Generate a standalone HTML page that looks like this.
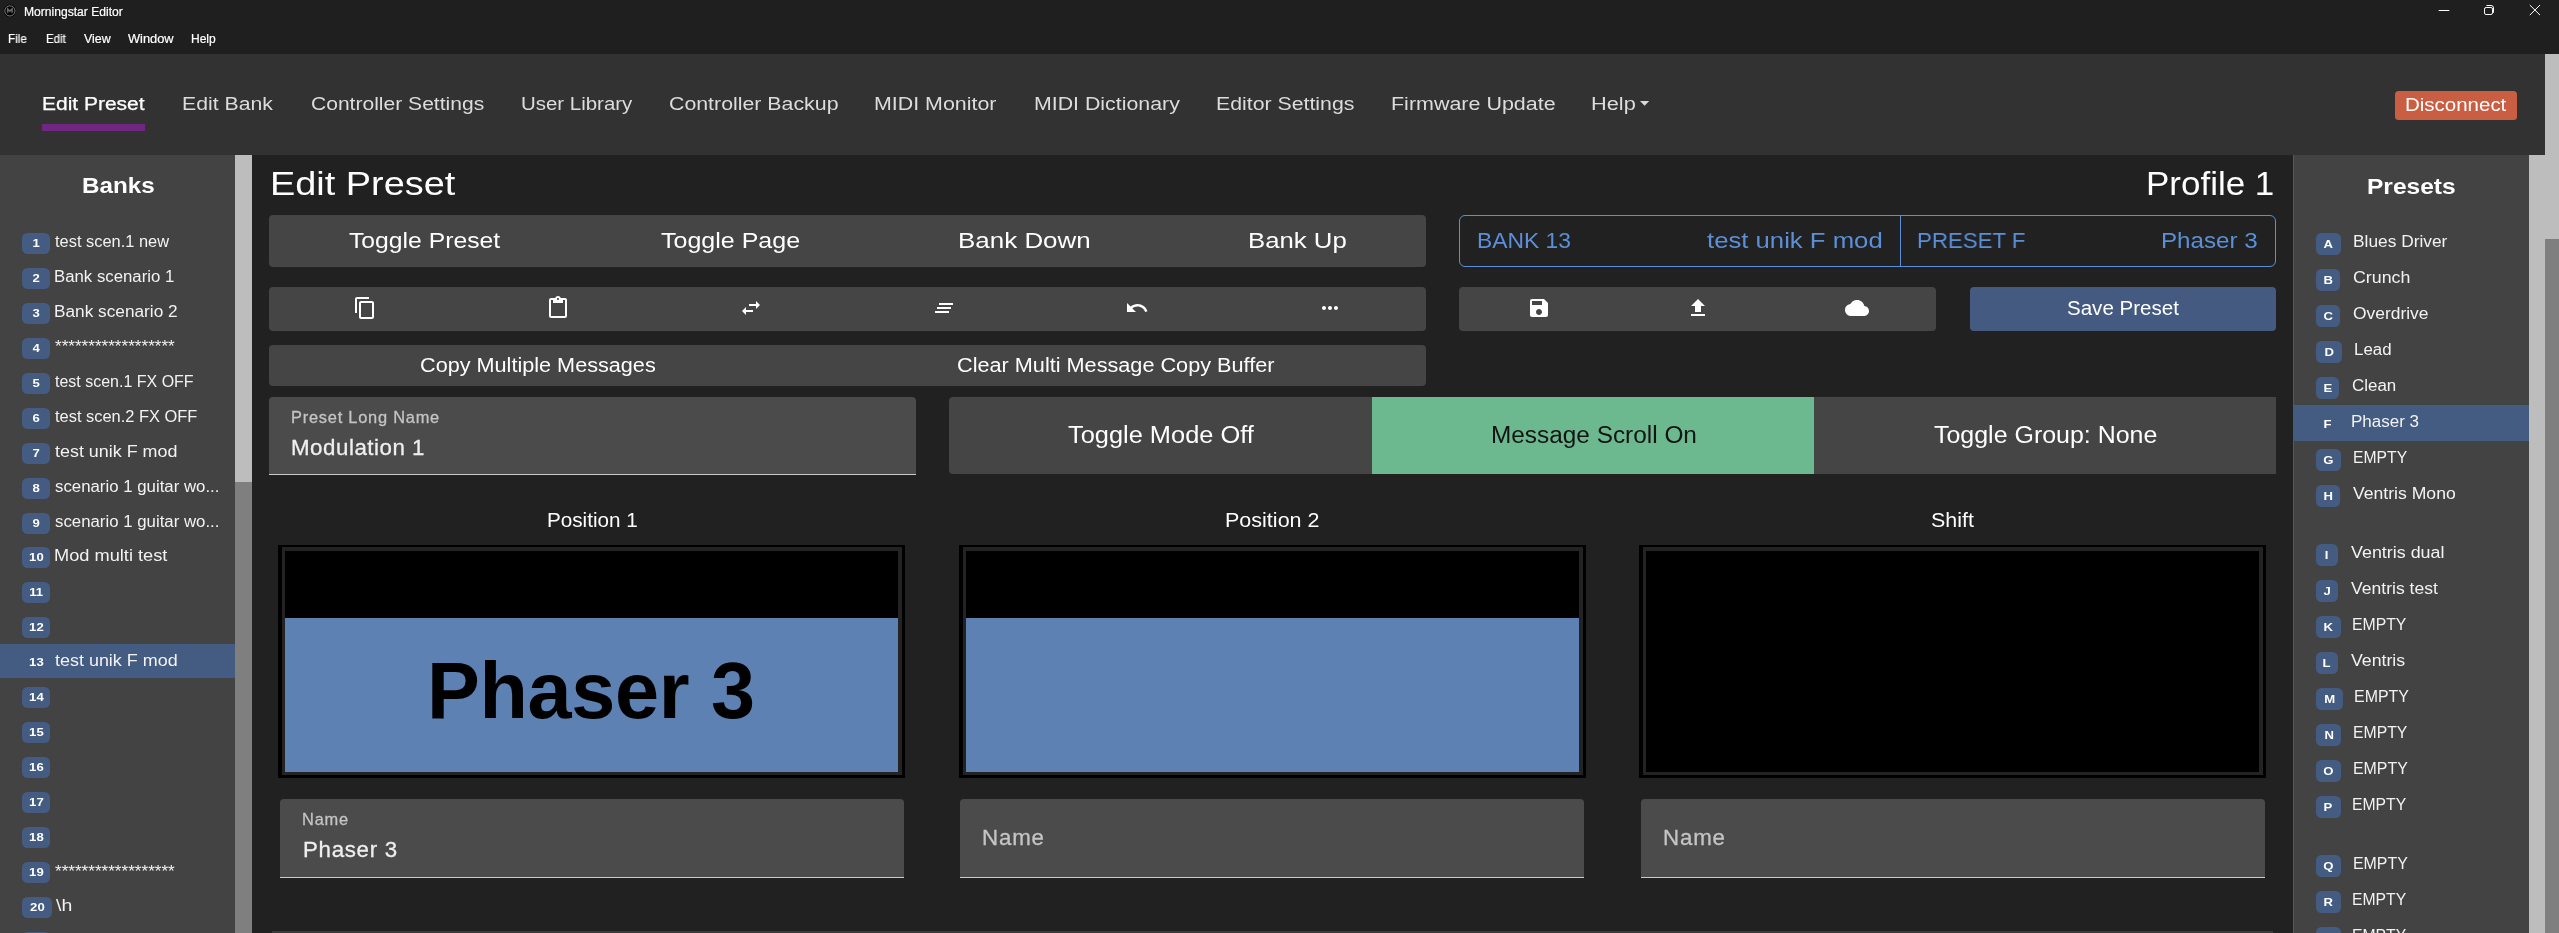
<!DOCTYPE html>
<html><head><meta charset="utf-8"><title>Morningstar Editor</title>
<style>
html,body{margin:0;padding:0;background:#212121;}
body{width:2559px;height:933px;position:relative;overflow:hidden;font-family:"Liberation Sans", sans-serif;}
.b{position:absolute;}
.t{will-change:transform;position:absolute;white-space:nowrap;line-height:1;transform-origin:0 0;font-family:"Liberation Sans", sans-serif;}
.m{position:absolute;white-space:nowrap;line-height:1;font-family:"Liberation Sans", sans-serif;}
.bd{position:absolute;height:21px;line-height:21.5px;border-radius:5.5px;background:#445b82;color:#fff;font-weight:700;font-size:11.5px;text-align:center;font-family:"Liberation Sans", sans-serif;}
.bd span{will-change:transform;display:inline-block;transform:scaleX(1.14);}
svg{position:absolute;overflow:visible}
</style></head><body>
<div class="b" style="left:0px;top:0px;width:2559.00px;height:54.00px;background:#1f1f1f;"></div><div class="b" style="left:0px;top:54px;width:2545.00px;height:101.00px;background:#323232;"></div><div class="b" style="left:0px;top:155px;width:235.00px;height:778.00px;background:#434343;"></div><div class="b" style="left:2293px;top:155px;width:236.00px;height:778.00px;background:#434343;"></div><div class="b" style="left:2293px;top:155px;width:1.00px;height:778.00px;background:#585858;"></div><div class="b" style="left:235px;top:155px;width:17.00px;height:327.00px;background:#bdbdbd;"></div><div class="b" style="left:235px;top:482px;width:17.00px;height:451.00px;background:#7f7f7f;"></div><div class="b" style="left:2529px;top:155px;width:16.00px;height:778.00px;background:#bdbdbd;"></div><div class="b" style="left:2545px;top:54px;width:14.00px;height:185.00px;background:#bdbdbd;"></div><div class="b" style="left:2545px;top:239px;width:14.00px;height:694.00px;background:#7f7f7f;"></div><div class="b" style="left:42.2px;top:124px;width:103.20px;height:7.00px;background:#702782;"></div><div class="b" style="left:2395px;top:91px;width:122.00px;height:29.00px;background:#ca5e42;border-radius:3.5px;"></div><div class="b" style="left:269px;top:215px;width:1157.00px;height:52.00px;background:#454545;border-radius:4px;"></div><div class="b" style="left:269px;top:287px;width:1157.00px;height:43.50px;background:#454545;border-radius:4px;"></div><div class="b" style="left:269px;top:345px;width:1157.00px;height:41.00px;background:#454545;border-radius:4px;"></div><div class="b" style="left:1459px;top:287px;width:477.00px;height:43.50px;background:#454545;border-radius:4px;"></div><div class="b" style="left:1970px;top:287px;width:306.00px;height:43.50px;background:#445a80;border-radius:4px;"></div><div class="b" style="left:1459px;top:215px;width:817px;height:52px;border:1px solid #5b8fd8;border-radius:6px;box-sizing:border-box"></div><div class="b" style="left:1900px;top:215px;width:1.00px;height:52.00px;background:#5b8fd8;"></div><div class="b" style="left:269px;top:397px;width:647.00px;height:77.60px;background:#4b4b4b;border-radius:4px 4px 0 0;border-bottom:1px solid #c9c9c9;box-sizing:border-box;"></div><div class="b" style="left:949px;top:397px;width:1327.00px;height:77.00px;background:#454545;border-radius:4px 0 0 4px;"></div><div class="b" style="left:1372px;top:397px;width:442.00px;height:77.00px;background:#6cb98f;"></div><div class="b" style="left:278px;top:545px;width:627.00px;height:233.00px;background:#000;"></div><div class="b" style="left:282.2px;top:547.4px;width:619.80px;height:228.10px;background:#232323;"></div><div class="b" style="left:285.4px;top:551.2px;width:612.70px;height:220.50px;background:#000;"></div><div class="b" style="left:285.4px;top:618px;width:612.70px;height:153.70px;background:#5d81b2;"></div><div class="b" style="left:959px;top:545px;width:627.00px;height:233.00px;background:#000;"></div><div class="b" style="left:963.2px;top:547.4px;width:619.80px;height:228.10px;background:#232323;"></div><div class="b" style="left:966.4px;top:551.2px;width:612.70px;height:220.50px;background:#000;"></div><div class="b" style="left:966.4px;top:618px;width:612.70px;height:153.70px;background:#5d81b2;"></div><div class="b" style="left:1639px;top:545px;width:627.00px;height:233.00px;background:#000;"></div><div class="b" style="left:1643.2px;top:547.4px;width:619.80px;height:228.10px;background:#232323;"></div><div class="b" style="left:1646.4px;top:551.2px;width:612.70px;height:220.50px;background:#000;"></div><div class="b" style="left:280px;top:799px;width:624.00px;height:78.50px;background:#4b4b4b;border-radius:4px 4px 0 0;border-bottom:1px solid #c9c9c9;box-sizing:border-box;"></div><div class="b" style="left:960px;top:799px;width:624.00px;height:78.50px;background:#4b4b4b;border-radius:4px 4px 0 0;border-bottom:1px solid #c9c9c9;box-sizing:border-box;"></div><div class="b" style="left:1641px;top:799px;width:624.00px;height:78.50px;background:#4b4b4b;border-radius:4px 4px 0 0;border-bottom:1px solid #c9c9c9;box-sizing:border-box;"></div><div class="b" style="left:272px;top:931px;width:2001.00px;height:2.00px;background:#3b3b3b;"></div><div class="b" style="left:0px;top:643.7px;width:235.00px;height:34.80px;background:#445b82;"></div><div class="b" style="left:2293px;top:405.2px;width:236.00px;height:36.00px;background:#445b82;"></div>
<div class="bd" style="left:22px;top:232.80px;width:28px"><span>1</span></div><div class="bd" style="left:22px;top:267.76px;width:28px"><span>2</span></div><div class="bd" style="left:22px;top:302.73px;width:28px"><span>3</span></div><div class="bd" style="left:22px;top:337.70px;width:28px"><span>4</span></div><div class="bd" style="left:22px;top:372.66px;width:28px"><span>5</span></div><div class="bd" style="left:22px;top:407.62px;width:28px"><span>6</span></div><div class="bd" style="left:22px;top:442.59px;width:28px"><span>7</span></div><div class="bd" style="left:22px;top:477.56px;width:28px"><span>8</span></div><div class="bd" style="left:22px;top:512.52px;width:28px"><span>9</span></div><div class="bd" style="left:22px;top:547.49px;width:28px"><span>10</span></div><div class="bd" style="left:22px;top:582.45px;width:28px"><span>11</span></div><div class="bd" style="left:22px;top:617.41px;width:28px"><span>12</span></div><div class="bd" style="left:22px;top:652.38px;width:28px"><span>13</span></div><div class="bd" style="left:22px;top:687.35px;width:28px"><span>14</span></div><div class="bd" style="left:22px;top:722.31px;width:28px"><span>15</span></div><div class="bd" style="left:22px;top:757.28px;width:28px"><span>16</span></div><div class="bd" style="left:22px;top:792.24px;width:28px"><span>17</span></div><div class="bd" style="left:22px;top:827.21px;width:28px"><span>18</span></div><div class="bd" style="left:22px;top:862.17px;width:28px"><span>19</span></div><div class="bd" style="left:22px;top:897.13px;width:30px"><span>20</span></div><div class="bd" style="left:22px;top:932.10px;width:28px"><span>21</span></div><div class="bd" style="left:2316px;top:232.90px;width:25.00px;height:22px;line-height:22.5px"><span>A</span></div><div class="bd" style="left:2316px;top:268.90px;width:24.30px;height:22px;line-height:22.5px"><span>B</span></div><div class="bd" style="left:2316px;top:304.90px;width:24.00px;height:22px;line-height:22.5px"><span>C</span></div><div class="bd" style="left:2316px;top:340.90px;width:25.90px;height:22px;line-height:22.5px"><span>D</span></div><div class="bd" style="left:2316px;top:376.90px;width:23.00px;height:22px;line-height:22.5px"><span>E</span></div><div class="bd" style="left:2316px;top:412.90px;width:23.50px;height:22px;line-height:22.5px"><span>F</span></div><div class="bd" style="left:2316px;top:448.90px;width:24.90px;height:22px;line-height:22.5px"><span>G</span></div><div class="bd" style="left:2316px;top:484.90px;width:24.20px;height:22px;line-height:22.5px"><span>H</span></div><div class="bd" style="left:2316px;top:544.20px;width:21.90px;height:22px;line-height:22.5px"><span>I</span></div><div class="bd" style="left:2316px;top:580.20px;width:21.90px;height:22px;line-height:22.5px"><span>J</span></div><div class="bd" style="left:2316px;top:616.20px;width:24.50px;height:22px;line-height:22.5px"><span>K</span></div><div class="bd" style="left:2316px;top:652.20px;width:21.90px;height:22px;line-height:22.5px"><span>L</span></div><div class="bd" style="left:2316px;top:688.20px;width:26.70px;height:22px;line-height:22.5px"><span>M</span></div><div class="bd" style="left:2316px;top:724.20px;width:25.40px;height:22px;line-height:22.5px"><span>N</span></div><div class="bd" style="left:2316px;top:760.20px;width:25.40px;height:22px;line-height:22.5px"><span>O</span></div><div class="bd" style="left:2316px;top:796.20px;width:24.50px;height:22px;line-height:22.5px"><span>P</span></div><div class="bd" style="left:2316px;top:855.10px;width:25.40px;height:22px;line-height:22.5px"><span>Q</span></div><div class="bd" style="left:2316px;top:891.10px;width:24.50px;height:22px;line-height:22.5px"><span>R</span></div><div class="bd" style="left:2316px;top:927.10px;width:24.50px;height:22px;line-height:22.5px"><span>S</span></div>
<span class="t" style="left:23.80px;top:6.00px;font-size:12px;color:#ffffff;transform:scaleX(1.0077);-webkit-text-stroke:0.2px;">Morningstar Editor</span><span class="t" style="left:8.40px;top:33.00px;font-size:12px;color:#ffffff;transform:scaleX(0.9714);-webkit-text-stroke:0.2px;">File</span><span class="t" style="left:45.50px;top:33.00px;font-size:12px;color:#ffffff;transform:scaleX(0.9605);-webkit-text-stroke:0.2px;">Edit</span><span class="t" style="left:84.00px;top:33.00px;font-size:12px;color:#ffffff;transform:scaleX(1.0334);-webkit-text-stroke:0.2px;">View</span><span class="t" style="left:128.00px;top:33.00px;font-size:12px;color:#ffffff;transform:scaleX(1.0694);-webkit-text-stroke:0.2px;">Window</span><span class="t" style="left:191.00px;top:33.00px;font-size:12px;color:#ffffff;transform:scaleX(0.9998);-webkit-text-stroke:0.2px;">Help</span><span class="t" style="left:42.40px;top:96.00px;font-size:17.5px;color:#ffffff;transform:scaleX(1.1979);-webkit-text-stroke:0.25px #fff;">Edit Preset</span><span class="t" style="left:181.79px;top:96.00px;font-size:17.5px;color:#dcdcdc;transform:scaleX(1.2137);">Edit Bank</span><span class="t" style="left:310.50px;top:96.00px;font-size:17.5px;color:#dcdcdc;transform:scaleX(1.2031);">Controller Settings</span><span class="t" style="left:520.53px;top:96.00px;font-size:17.5px;color:#dcdcdc;transform:scaleX(1.1676);">User Library</span><span class="t" style="left:669.10px;top:96.00px;font-size:17.5px;color:#dcdcdc;transform:scaleX(1.2185);">Controller Backup</span><span class="t" style="left:874.28px;top:96.00px;font-size:17.5px;color:#dcdcdc;transform:scaleX(1.2222);">MIDI Monitor</span><span class="t" style="left:1033.78px;top:96.00px;font-size:17.5px;color:#dcdcdc;transform:scaleX(1.2192);">MIDI Dictionary</span><span class="t" style="left:1216.08px;top:96.00px;font-size:17.5px;color:#dcdcdc;transform:scaleX(1.2162);">Editor Settings</span><span class="t" style="left:1390.97px;top:96.00px;font-size:17.5px;color:#dcdcdc;transform:scaleX(1.2267);">Firmware Update</span><span class="t" style="left:1591.36px;top:96.00px;font-size:17.5px;color:#dcdcdc;transform:scaleX(1.2435);">Help</span><span class="t" style="left:2405.18px;top:96.00px;font-size:18.3px;color:#ffffff;transform:scaleX(1.1203);">Disconnect</span><span class="t" style="left:81.50px;top:175.00px;font-size:22px;font-weight:700;color:#fff;transform:scaleX(1.1019);">Banks</span><span class="t" style="left:2366.88px;top:176.00px;font-size:22px;font-weight:700;color:#fff;transform:scaleX(1.1154);">Presets</span><span class="t" style="left:269.56px;top:168.00px;font-size:32.3px;color:#fff;transform:scaleX(1.1725);">Edit Preset</span><span class="t" style="left:2145.93px;top:168.00px;font-size:32.3px;color:#fff;transform:scaleX(1.0830);">Profile 1</span><span class="t" style="left:349.30px;top:230.00px;font-size:22.5px;color:#fff;transform:scaleX(1.0988);">Toggle Preset</span><span class="t" style="left:660.50px;top:230.00px;font-size:22.5px;color:#fff;transform:scaleX(1.1117);">Toggle Page</span><span class="t" style="left:957.85px;top:230.00px;font-size:22.5px;color:#fff;transform:scaleX(1.1537);">Bank Down</span><span class="t" style="left:1247.86px;top:230.00px;font-size:22.5px;color:#fff;transform:scaleX(1.1441);">Bank Up</span><span class="t" style="left:1476.99px;top:230.00px;font-size:22.5px;color:#5b8fd8;transform:scaleX(1.0150);">BANK 13</span><span class="t" style="left:1707.20px;top:230.00px;font-size:22.5px;color:#5b8fd8;transform:scaleX(1.1422);">test unik F mod</span><span class="t" style="left:1917.21px;top:230.00px;font-size:22.5px;color:#5b8fd8;transform:scaleX(0.9901);">PRESET F</span><span class="t" style="left:2161.43px;top:230.00px;font-size:22.5px;color:#5b8fd8;transform:scaleX(1.0741);">Phaser 3</span><span class="t" style="left:420.00px;top:356.00px;font-size:19.5px;color:#fff;transform:scaleX(1.1097);">Copy Multiple Messages</span><span class="t" style="left:957.00px;top:356.00px;font-size:19.5px;color:#fff;transform:scaleX(1.1109);">Clear Multi Message Copy Buffer</span><span class="t" style="left:2066.70px;top:299.00px;font-size:19.5px;color:#fff;transform:scaleX(1.0533);">Save Preset</span><span class="t" style="left:1068.40px;top:424.00px;font-size:23px;color:#fff;transform:scaleX(1.1038);">Toggle Mode Off</span><span class="t" style="left:1490.74px;top:424.00px;font-size:23px;color:#141414;transform:scaleX(1.0597);">Message Scroll On</span><span class="t" style="left:1934.00px;top:424.00px;font-size:23px;color:#fff;transform:scaleX(1.0850);">Toggle Group: None</span><span class="t" style="left:546.64px;top:511.00px;font-size:19.5px;color:#fff;transform:scaleX(1.0598);">Position 1</span><span class="t" style="left:1225.40px;top:511.00px;font-size:19.5px;color:#fff;transform:scaleX(1.1039);">Position 2</span><span class="t" style="left:1931.00px;top:511.00px;font-size:19.5px;color:#fff;transform:scaleX(1.0984);">Shift</span><span class="t" style="left:55.00px;top:234.00px;font-size:15.6px;color:#f2f2f2;transform:scaleX(1.0524);">test scen.1 new</span><span class="t" style="left:54.42px;top:269.00px;font-size:15.6px;color:#f2f2f2;transform:scaleX(1.0758);">Bank scenario 1</span><span class="t" style="left:54.39px;top:304.00px;font-size:15.6px;color:#f2f2f2;transform:scaleX(1.1058);">Bank scenario 2</span><span class="t" style="left:54.80px;top:374.00px;font-size:15.6px;color:#f2f2f2;transform:scaleX(1.0256);">test scen.1 FX OFF</span><span class="t" style="left:54.80px;top:409.00px;font-size:15.6px;color:#f2f2f2;transform:scaleX(1.0531);">test scen.2 FX OFF</span><span class="t" style="left:54.80px;top:444.00px;font-size:15.6px;color:#f2f2f2;transform:scaleX(1.1480);">test unik F mod</span><span class="t" style="left:54.80px;top:479.00px;font-size:15.6px;color:#f2f2f2;transform:scaleX(1.0779);">scenario 1 guitar wo...</span><span class="t" style="left:54.80px;top:514.00px;font-size:15.6px;color:#f2f2f2;transform:scaleX(1.0779);">scenario 1 guitar wo...</span><span class="t" style="left:53.83px;top:548.00px;font-size:15.6px;color:#f2f2f2;transform:scaleX(1.1683);">Mod multi test</span><span class="t" style="left:54.50px;top:653.00px;font-size:15.6px;color:#f2f2f2;transform:scaleX(1.1508);">test unik F mod</span><span class="t" style="left:56.00px;top:898.00px;font-size:15.6px;color:#f2f2f2;transform:scaleX(1.2487);">\h</span><span class="t" style="left:2352.59px;top:234.00px;font-size:15.6px;color:#f2f2f2;transform:scaleX(1.1107);">Blues Driver</span><span class="t" style="left:2353.00px;top:270.00px;font-size:15.6px;color:#f2f2f2;transform:scaleX(1.1412);">Crunch</span><span class="t" style="left:2352.70px;top:306.00px;font-size:15.6px;color:#f2f2f2;transform:scaleX(1.1163);">Overdrive</span><span class="t" style="left:2353.52px;top:342.00px;font-size:15.6px;color:#f2f2f2;transform:scaleX(1.0812);">Lead</span><span class="t" style="left:2351.70px;top:378.00px;font-size:15.6px;color:#f2f2f2;transform:scaleX(1.0856);">Clean</span><span class="t" style="left:2351.11px;top:414.00px;font-size:15.6px;color:#f2f2f2;transform:scaleX(1.0899);">Phaser 3</span><span class="t" style="left:2352.59px;top:450.00px;font-size:15.6px;color:#f2f2f2;transform:scaleX(1.0072);">EMPTY</span><span class="t" style="left:2352.90px;top:486.00px;font-size:15.6px;color:#f2f2f2;transform:scaleX(1.1288);">Ventris Mono</span><span class="t" style="left:2350.60px;top:545.00px;font-size:15.6px;color:#f2f2f2;transform:scaleX(1.1466);">Ventris dual</span><span class="t" style="left:2350.60px;top:581.00px;font-size:15.6px;color:#f2f2f2;transform:scaleX(1.1259);">Ventris test</span><span class="t" style="left:2352.19px;top:617.00px;font-size:15.6px;color:#f2f2f2;transform:scaleX(1.0128);">EMPTY</span><span class="t" style="left:2350.60px;top:653.00px;font-size:15.6px;color:#f2f2f2;transform:scaleX(1.1363);">Ventris</span><span class="t" style="left:2354.38px;top:689.00px;font-size:15.6px;color:#f2f2f2;transform:scaleX(1.0222);">EMPTY</span><span class="t" style="left:2353.09px;top:725.00px;font-size:15.6px;color:#f2f2f2;transform:scaleX(1.0109);">EMPTY</span><span class="t" style="left:2353.08px;top:761.00px;font-size:15.6px;color:#f2f2f2;transform:scaleX(1.0203);">EMPTY</span><span class="t" style="left:2352.19px;top:797.00px;font-size:15.6px;color:#f2f2f2;transform:scaleX(1.0091);">EMPTY</span><span class="t" style="left:2353.08px;top:856.00px;font-size:15.6px;color:#f2f2f2;transform:scaleX(1.0203);">EMPTY</span><span class="t" style="left:2352.19px;top:892.00px;font-size:15.6px;color:#f2f2f2;transform:scaleX(1.0091);">EMPTY</span><span class="t" style="left:2352.19px;top:928.00px;font-size:15.6px;color:#f2f2f2;transform:scaleX(1.0091);">EMPTY</span><span class="t" style="left:54.50px;top:339.00px;font-size:16px;color:#f2f2f2;transform:scaleX(1.0684);">******************</span><span class="t" style="left:54.50px;top:864.00px;font-size:16px;color:#f2f2f2;transform:scaleX(1.0684);">******************</span><span class="t" style="left:290.60px;top:409.00px;font-size:16.4px;color:#c4c4c4;letter-spacing:0.770px;-webkit-text-stroke:0.3px;">Preset Long Name</span><span class="t" style="left:291.10px;top:437.00px;font-size:22.3px;color:#efefef;letter-spacing:0.530px;-webkit-text-stroke:0.3px;">Modulation 1</span><span class="t" style="left:301.80px;top:811.00px;font-size:16.4px;color:#c4c4c4;letter-spacing:0.831px;-webkit-text-stroke:0.3px;">Name</span><span class="t" style="left:302.50px;top:839.00px;font-size:22.3px;color:#efefef;letter-spacing:0.694px;-webkit-text-stroke:0.3px;">Phaser 3</span><span class="t" style="left:981.80px;top:827.00px;font-size:22.3px;color:#c4c4c4;letter-spacing:0.841px;-webkit-text-stroke:0.3px;">Name</span><span class="t" style="left:1662.80px;top:827.00px;font-size:22.3px;color:#c4c4c4;letter-spacing:0.841px;-webkit-text-stroke:0.3px;">Name</span><span class="t" style="left:427.40px;top:651.00px;font-size:79.2px;font-weight:700;color:#000;letter-spacing:-0.304px;">Phaser 3</span>


<svg style="left:353.4px;top:296px" width="24" height="24" viewBox="0 0 24 24"><path fill="#fff" d="M16 1H4c-1.1 0-2 .9-2 2v14h2V3h12V1zm3 4H8c-1.1 0-2 .9-2 2v14c0 1.1.9 2 2 2h11c1.1 0 2-.9 2-2V7c0-1.1-.9-2-2-2zm0 16H8V7h11v14z"/></svg>
<svg style="left:546.2px;top:296px" width="24" height="24" viewBox="0 0 24 24"><path fill="#fff" d="M19 2h-4.18C14.4.84 13.3 0 12 0c-1.3 0-2.4.84-2.82 2H5c-1.1 0-2 .9-2 2v16c0 1.1.9 2 2 2h14c1.1 0 2-.9 2-2V4c0-1.1-.9-2-2-2zm-7 0c.55 0 1 .45 1 1s-.45 1-1 1-1-.45-1-1 .45-1 1-1zm7 18H5V4h2v3h10V4h2v16z"/></svg>
<svg style="left:739.1px;top:296px" width="24" height="24" viewBox="0 0 24 24"><path fill="#fff" d="M6.99 11L3 15l3.99 4v-3H14v-2H6.99v-3zM21 9l-3.99-4v3H10v2h7.01v3L21 9z"/></svg>
<svg style="left:931.9px;top:296px" width="24" height="24" viewBox="0 0 24 24"><path fill="#fff" d="M5 13h14v-2H5v2zm-2 4h14v-2H3v2zM7 7v2h14V7H7z"/></svg>
<svg style="left:1124.8px;top:296px" width="24" height="24" viewBox="0 0 24 24"><path fill="#fff" d="M12.5 8c-2.65 0-5.05.99-6.9 2.6L2 7v9h9l-3.62-3.62c1.39-1.16 3.16-1.88 5.12-1.88 3.54 0 6.55 2.31 7.6 5.5l2.37-.78C21.08 11.03 17.15 8 12.5 8z"/></svg>
<svg style="left:1317.6px;top:296px" width="24" height="24" viewBox="0 0 24 24"><path fill="#fff" d="M6 10c-1.1 0-2 .9-2 2s.9 2 2 2 2-.9 2-2-.9-2-2-2zm12 0c-1.1 0-2 .9-2 2s.9 2 2 2 2-.9 2-2-.9-2-2-2zm-6 0c-1.1 0-2 .9-2 2s.9 2 2 2 2-.9 2-2-.9-2-2-2z"/></svg>
<svg style="left:1526.5px;top:296px" width="24" height="24" viewBox="0 0 24 24"><path fill="#fff" d="M17 3H5c-1.11 0-2 .9-2 2v14c0 1.1.89 2 2 2h14c1.1 0 2-.9 2-2V7l-4-4zm-5 16c-1.66 0-3-1.34-3-3s1.34-3 3-3 3 1.34 3 3-1.34 3-3 3zm3-10H5V5h10v4z"/></svg>
<svg style="left:1685.5px;top:296px" width="24" height="24" viewBox="0 0 24 24"><path fill="#fff" d="M9 16h6v-6h4l-7-7-7 7h4zm-4 2h14v2H5z"/></svg>
<svg style="left:1844.5px;top:296px" width="24" height="24" viewBox="0 0 24 24"><path fill="#fff" d="M19.35 10.04C18.67 6.59 15.64 4 12 4 9.11 4 6.6 5.64 5.35 8.04 2.34 8.36 0 10.91 0 14c0 3.31 2.69 6 6 6h13c2.76 0 5-2.24 5-5 0-2.64-2.05-4.78-4.65-4.96z"/></svg>
<svg style="left:1640.3px;top:100.6px" width="9.2" height="4.7" viewBox="0 0 10 5"><path fill="#d9d9d9" d="M0 0h10L5 5z"/></svg>
<svg style="left:2430px;top:0" width="129" height="28" viewBox="0 0 129 28" fill="none" stroke="#fff" stroke-width="1"><path d="M8.7 10.5h10.6"/><rect x="54.5" y="7.5" width="8" height="7" rx="1.6"/><path d="M56.5 5.5h4.6a2.4 2.4 0 0 1 2.4 2.4v4.8"/><path d="M99.8 5l10.2 10.1M110 5l-10.2 10.1"/></svg>
<svg style="left:0;top:0" width="22" height="22" viewBox="0 0 22 22"><circle cx="9.9" cy="10.9" r="6.3" fill="#050505"/><circle cx="9.9" cy="10.9" r="5.1" fill="none" stroke="#8c8c8c" stroke-width="0.85"/><path d="M7.7 12.7V9L9.9 11.1L12.1 9V12.7" fill="none" stroke="#6a6a6a" stroke-width="1.5"/></svg>
</body></html>
